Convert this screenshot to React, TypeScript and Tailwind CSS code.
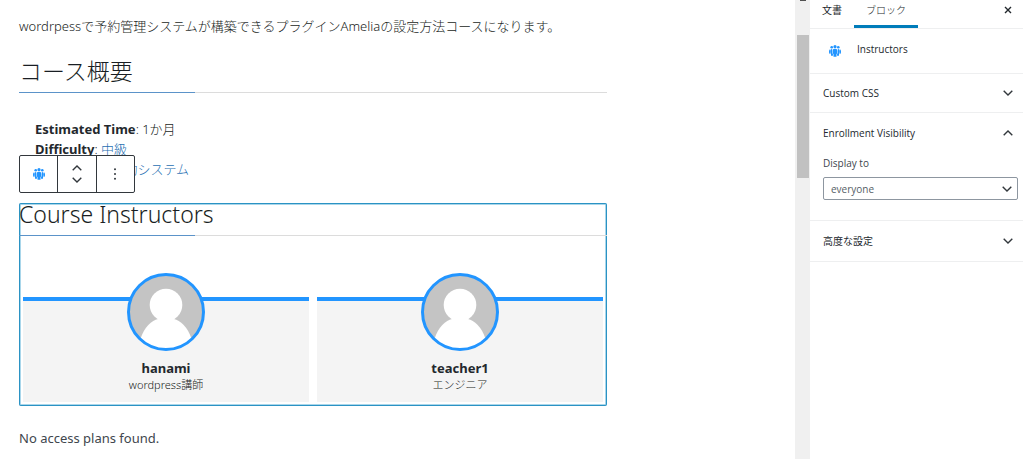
import { useState } from "react";

const instructors = [
  { name: "hanami", role: "wordpress講師" },
  { name: "teacher1", role: "エンジニア" },
];

function GroupIcon({ className }: { className: string }) {
  return (
    <svg viewBox="0 0 24 24" className={className} fill="#2295ff" aria-hidden="true">
      <circle cx="12" cy="3.4" r="3.2" />
      <circle cx="5.4" cy="4.6" r="2.6" />
      <circle cx="18.6" cy="4.6" r="2.6" />
      <path d="M7.2 12c0-3 1.4-4.600 4.800-4.600s4.800 1.600 4.800 4.600c0 3.500-.8 5.400-1.800 6.400V23.500H9v-5.100C8 17.400 7.200 15.500 7.200 12z" />
      <path d="M6.400 8C3.600 7.800 2.400 9.600 2.400 12.500c0 2.800.6 4.800 1.600 5.800V21.500h3.900v-3C6.700 16.500 6.200 14.500 6.200 12c0-1.500 0-2.700.2-4z" />
      <path d="M17.600 8c2.800-.2 4 1.600 4 4.500 0 2.800-.6 4.800-1.600 5.800V21.500h-3.900v-3c1.200-2 1.700-4 1.700-6.500 0-1.500 0-2.700-.2-4z" />
      <path d="M2 8.500C.6 9.500 0 11.500 0 13.500s.7 3.800 2.200 4.800z" />
      <path d="M22 8.500c1.400 1 2 3 2 5s-.7 3.800-2.200 4.800z" />
    </svg>
  );
}

function Chevron({ up = false }: { up?: boolean }) {
  return (
    <svg viewBox="0 0 10 6" className="w-[10px] h-[6px] shrink-0" fill="none" stroke="#32373c" strokeWidth="1.4" aria-hidden="true">
      <path d={up ? "M.7 5.2 5 1l4.3 4.2" : "M.7.8 5 5 9.3.8"} />
    </svg>
  );
}

function Avatar() {
  return (
    <svg viewBox="0 0 78 78" className="w-[78px] h-[78px]" role="img" aria-label="avatar">
      <circle cx="39" cy="39" r="37.5" fill="#c4c4c4" />
      <circle cx="39" cy="32" r="16.3" fill="#fff" />
      <path d="M13.5 66C17 54 25 47.5 31 46c2-.5 14-.5 16 0 6 1.5 14 8 17.5 20A37 37 0 0 1 13.5 66z" fill="#fff" />
      <circle cx="39" cy="39" r="37.5" fill="none" stroke="#2295ff" strokeWidth="3" />
    </svg>
  );
}

function SectionTitle({ children }: { children: string }) {
  return (
    <div>
      <h2 className="h-8 text-[23px] leading-[22px] font-light text-[#191e23]">{children}</h2>
      <div className="h-px bg-[#dcdcdc]">
        <div className="h-px w-[30%] bg-[#5b93c9]" />
      </div>
    </div>
  );
}

export default function App() {
  const [cssOpen, setCssOpen] = useState(false);
  const [visibilityOpen, setVisibilityOpen] = useState(true);
  const [advancedOpen, setAdvancedOpen] = useState(false);
  const [display, setDisplay] = useState("everyone");

  return (
    <div className="flex min-h-screen bg-white">
      <main className="flex-1 min-w-0 pl-[19px] pt-4 text-[13px] leading-5 font-light text-[#191e23] font-['Noto_Sans','Noto_Sans_CJK_JP',sans-serif]">
        <div className="max-w-[588px]">
          <p>wordrpessで予約管理システムが構築できるプラグインAmeliaの設定方法コースになります。</p>

          <div className="mt-6">
            <SectionTitle>コース概要</SectionTitle>
          </div>

          <div className="relative mt-[26px]">
            <ul className="pl-4">
              <li><strong className="font-bold text-[#23282d]">Estimated Time</strong>: 1か月</li>
              <li><strong className="font-bold text-[#23282d]">Difficulty</strong>: <a href="#level" className="text-[#1f6fb2]">中級</a></li>
              <li><strong className="font-bold text-[#23282d]">Categories</strong>: <a href="#category" className="text-[#1f6fb2]">予約システム</a></li>
            </ul>

            {/* block toolbar floats over the list */}
            <div className="absolute left-0 top-9 flex h-[38px] w-[116px] divide-x divide-[#32373c] rounded-xs border border-[#32373c] bg-white">
              <button aria-label="Instructors" className="flex flex-1 items-center justify-center">
                <GroupIcon className="w-3 h-3" />
              </button>
              <div className="flex flex-1 flex-col items-center justify-center gap-1">
                <button aria-label="Move up" className="flex h-2 items-center"><Chevron up /></button>
                <button aria-label="Move down" className="flex h-2 items-center"><Chevron /></button>
              </div>
              <button aria-label="More options" className="flex flex-1 items-center justify-center">
                <svg viewBox="0 0 4 12" className="w-1 h-3" fill="#32373c" aria-hidden="true">
                  <circle cx="2" cy="1.2" r="1" />
                  <circle cx="2" cy="6" r="1" />
                  <circle cx="2" cy="10.8" r="1" />
                </svg>
              </button>
            </div>
          </div>

          <section className="mt-6 rounded-xs shadow-[inset_0_0_0_1px_#2b93c4,inset_0_0_0_2px_#a9d6ea]">
            <SectionTitle>Course Instructors</SectionTitle>
            <div className="mt-[37px] grid grid-cols-2 gap-2 px-1 pb-1">
              {instructors.map((person) => (
                <div key={person.name} className="mt-6 flex h-[105px] flex-col items-center border-t-4 border-[#2295ff] bg-[#f4f4f4] text-center">
                  <div className="-mt-7">
                    <Avatar />
                  </div>
                  <div className="mt-2 font-bold leading-[18px] text-[#23282d]">{person.name}</div>
                  <div className="text-[11px] leading-4">{person.role}</div>
                </div>
              ))}
            </div>
          </section>

          <p className="mt-[22px] font-normal text-[#40464d]">No access plans found.</p>
        </div>
      </main>

      <div className="flex w-[15px] shrink-0 flex-col items-center bg-[#f0f0f0]" aria-hidden="true">
        <div className="h-px w-1.5 bg-[#505050]" />
        <div className="mt-[34px] h-[143px] w-3 bg-[#c1c1c1]" />
      </div>

      <aside className="w-[213px] shrink-0 text-[10px] leading-4 text-[#23282d] font-['Open_Sans','Noto_Sans_CJK_JP',sans-serif]">
        <div className="flex h-[29px] border-b border-[#eeeff0]">
          <button className="px-3 pb-2">文書</button>
          <button className="border-b-3 border-[#007cba] px-3 pb-1.5 font-light">ブロック</button>
          <button aria-label="Close settings" className="ml-auto pr-[11px] pb-2">
            <svg viewBox="0 0 8 8" className="w-2 h-2" stroke="#23282d" strokeWidth="1.4" aria-hidden="true">
              <path d="M1 1l6 6M7 1 1 7" />
            </svg>
          </button>
        </div>

        <div className="flex h-[45px] gap-4 border-b border-[#eeeff0] pl-[19px] pt-3">
          <GroupIcon className="mt-1 h-3 w-3" />
          <h2>Instructors</h2>
        </div>

        <button aria-expanded={cssOpen} onClick={() => setCssOpen(!cssOpen)} className="flex h-[39px] w-full items-center justify-between border-b border-[#eeeff0] pl-[13px] pr-[10px]">
          Custom CSS
          <Chevron up={cssOpen} />
        </button>

        <div className="border-b border-[#eeeff0]">
          <button aria-expanded={visibilityOpen} onClick={() => setVisibilityOpen(!visibilityOpen)} className="flex h-10 w-full items-center justify-between pl-[13px] pr-[10px]">
            Enrollment Visibility
            <Chevron up={visibilityOpen} />
          </button>
          {visibilityOpen && (
            <div className="pl-[13px] pr-[5px] pb-5 pt-0.5">
              <label htmlFor="display-to" className="block text-[#40464d]">Display to</label>
              <div className="mt-1.5 grid items-center">
                <select
                  id="display-to"
                  value={display}
                  onChange={(e) => setDisplay(e.target.value)}
                  className="col-start-1 row-start-1 h-[23px] w-full appearance-none rounded-xs border border-[#8d96a0] bg-white px-[7px] text-[#555d66]"
                >
                  <option value="everyone">everyone</option>
                  <option value="enrolled">enrolled users</option>
                </select>
                <div className="pointer-events-none col-start-1 row-start-1 mr-1.5 justify-self-end">
                  <Chevron />
                </div>
              </div>
            </div>
          )}
        </div>

        <button aria-expanded={advancedOpen} onClick={() => setAdvancedOpen(!advancedOpen)} className="flex h-[41px] w-full items-center justify-between border-b border-[#eeeff0] pl-[13px] pr-[10px]">
          高度な設定
          <Chevron up={advancedOpen} />
        </button>
      </aside>
    </div>
  );
}
